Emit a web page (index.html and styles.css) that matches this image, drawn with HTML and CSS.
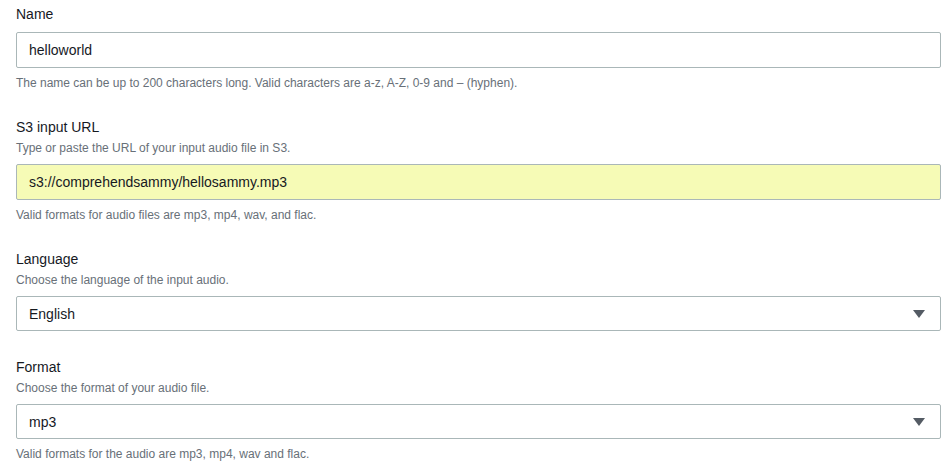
FILE: index.html
```html
<!DOCTYPE html>
<html>

<head>
    <title>Create transcription job</title>
    <link rel="stylesheet" href="styles.css">
</head>

<body>
    <form class="job-form">
        <div class="field">
            <label class="field-label" for="jobName">Name</label>
            <input class="text-input" type="text" id="jobName" value="helloworld">
            <p class="hint">The name can be up to 200 characters long. Valid characters are a-z, A-Z, 0-9 and – (hyphen).</p>
        </div>

        <div class="field">
            <label class="field-label" for="inputUrl">S3 input URL</label>
            <p class="description">Type or paste the URL of your input audio file in S3.</p>
            <input class="text-input autofilled" type="text" id="inputUrl" value="s3://comprehendsammy/hellosammy.mp3">
            <p class="hint">Valid formats for audio files are mp3, mp4, wav, and flac.</p>
        </div>

        <div class="field">
            <label class="field-label">Language</label>
            <p class="description">Choose the language of the input audio.</p>
            <div class="select">
                <span>English</span>
                <svg class="caret" width="12" height="8" viewBox="0 0 12 8"><path d="M0 0h12L6 8z"/></svg>
            </div>
        </div>

        <div class="field">
            <label class="field-label">Format</label>
            <p class="description">Choose the format of your audio file.</p>
            <div class="select">
                <span>mp3</span>
                <svg class="caret" width="12" height="8" viewBox="0 0 12 8"><path d="M0 0h12L6 8z"/></svg>
            </div>
            <p class="hint">Valid formats for the audio are mp3, mp4, wav and flac.</p>
        </div>
    </form>
</body>
</html>
```

FILE: styles.css
```css
body {
    margin: 0;
    background-color: #ffffff;
    font-family: "Liberation Sans", Arial, sans-serif;
    color: #16191f;
}

.job-form {
    padding: 4px 8px 0 16px;
}

.field {
    display: flex;
    flex-direction: column;
    margin-bottom: 26px;
}

.field:last-child {
    margin-bottom: 0;
}

.field-label {
    font-size: 14px;
    line-height: 20px;
    color: #16191f;
}

.description {
    margin: 3px 0 0;
    font-size: 12px;
    line-height: 16px;
    color: #687078;
}

.hint {
    margin: 7px 0 0;
    font-size: 12px;
    line-height: 16px;
    color: #687078;
}

.text-input,
.select {
    box-sizing: border-box;
    height: 36px;
    margin-top: 8px;
    padding: 0 15px 0 12px;
    border: 1px solid #aab7b8;
    border-radius: 2px;
    background-color: #ffffff;
    font-family: inherit;
    font-size: 14px;
    color: #16191f;
}

.text-input.autofilled {
    background-color: #f6fbb6;
}

.select {
    display: flex;
    align-items: center;
    justify-content: space-between;
    height: 35px;
}

.caret {
    fill: #545b64;
}
```
